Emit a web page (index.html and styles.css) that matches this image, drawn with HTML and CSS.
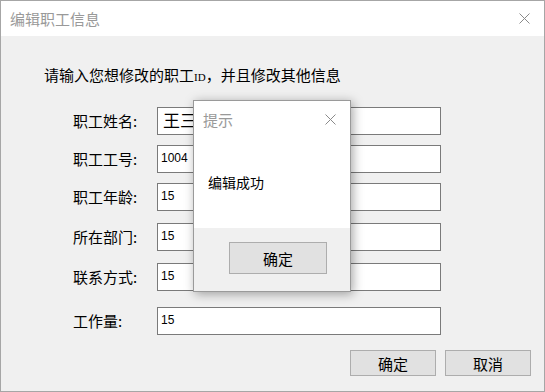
FILE: index.html
```html
<!DOCTYPE html>
<html>

<head>
    <meta charset="UTF-8">
    <meta name="viewport" content="width=device-width, initial-scale=1.0">
    <title>编辑职工信息</title>
    <link rel="stylesheet" href="styles.css">
</head>

<body>
    <div class="window">
        <div class="titlebar">
            <span class="title">编辑职工信息</span>
            <svg class="close" width="11" height="11" viewBox="0 0 11 11">
                <path d="M0.5 0.5 L10.5 10.5 M10.5 0.5 L0.5 10.5" stroke="#8a8a8a" stroke-width="1" fill="none" />
            </svg>
        </div>

        <div class="content">
            <p class="hint">请输入您想修改的职工<span class="small">ID</span>，并且修改其他信息</p>

            <div class="form">
                <div class="row">
                    <label>职工姓名:</label>
                    <input class="field cn" type="text" value="王三">
                </div>
                <div class="row">
                    <label>职工工号:</label>
                    <input class="field" type="text" value="1004">
                </div>
                <div class="row">
                    <label>职工年龄:</label>
                    <input class="field" type="text" value="15">
                </div>
                <div class="row gap-md">
                    <label>所在部门:</label>
                    <input class="field" type="text" value="15">
                </div>
                <div class="row gap-md">
                    <label>联系方式:</label>
                    <input class="field" type="text" value="15">
                </div>
                <div class="row gap-lg">
                    <label>工作量:</label>
                    <input class="field" type="text" value="15">
                </div>
            </div>

            <div class="actions">
                <button class="btn">确定</button>
                <button class="btn">取消</button>
            </div>
        </div>

        <!-- message box on top of the form -->
        <div class="msgbox">
            <div class="msg-title">
                <span>提示</span>
                <svg class="close" width="11" height="11" viewBox="0 0 11 11">
                    <path d="M0.5 0.5 L10.5 10.5 M10.5 0.5 L0.5 10.5" stroke="#8a8a8a" stroke-width="1" fill="none" />
                </svg>
            </div>
            <div class="msg-body">编辑成功</div>
            <div class="msg-footer">
                <button class="btn msg-btn">确定</button>
            </div>
        </div>
    </div>
</body>

</html>
```

FILE: styles.css
```css
* {
    box-sizing: border-box;
}

body {
    margin: 0;
    font-family: "Noto Sans CJK SC", "Liberation Sans", sans-serif;
    font-size: 15px;
    color: #000;
}

.window {
    position: relative;
    width: 545px;
    height: 392px;
    border: 1px solid #a6a6a6;
    background-color: #f0f0f0;
    display: flex;
    flex-direction: column;
}

/* Title bar */
.titlebar {
    height: 35px;
    flex-shrink: 0;
    background-color: #fff;
    display: flex;
    align-items: center;
    justify-content: space-between;
    padding: 0 14px 0 9px;
}

.title {
    color: #999;
    font-size: 15px;
}

.close {
    display: block;
}

.content {
    flex: 1;
    padding: 0 0 0 43px;
}

.hint {
    margin: 29px 0 0 0;
    font-size: 15px;
    line-height: 20px;
    height: 20px;
}

.hint .small {
    font-family: "Liberation Serif", serif;
    font-size: 11px;
    line-height: 1;
}

.form {
    margin-top: 22px;
    padding-left: 29px;
    display: flex;
    flex-direction: column;
    gap: 10px;
}

.row {
    display: flex;
    align-items: center;
    height: 28px;
}

.row.gap-md {
    margin-top: 2px;
}

.row.gap-lg {
    margin-top: 6px;
}

.row label {
    width: 84px;
    font-size: 15px;
    padding-bottom: 2px;
}

.field {
    width: 284px;
    height: 28px;
    border: 1px solid #7a7a7a;
    background-color: #fff;
    padding: 0 0 3px 3px;
    font-family: "Liberation Sans", sans-serif;
    font-size: 12px;
    color: #000;
    outline: none;
}

.field.cn {
    font-family: "Noto Sans CJK SC", sans-serif;
    font-size: 17px;
    padding-left: 5px;
}

.actions {
    display: flex;
    justify-content: flex-end;
    gap: 9px;
    margin-top: 15px;
    padding-right: 13px;
}

.btn {
    width: 86px;
    height: 26px;
    border: 1px solid #adadad;
    background-color: #e1e1e1;
    font-family: "Noto Sans CJK SC", sans-serif;
    font-size: 15px;
    color: #000;
    padding: 0;
}

/* Message box */
.msgbox {
    position: absolute;
    left: 192px;
    top: 99px;
    width: 158px;
    height: 192px;
    border: 1px solid #9a9a9a;
    background-color: #fff;
    box-shadow: 2px 2px 10px rgba(0, 0, 0, 0.35);
    display: flex;
    flex-direction: column;
}

.msg-title {
    height: 36px;
    display: flex;
    align-items: center;
    justify-content: space-between;
    padding: 0 14px 0 9px;
    color: #999;
    font-size: 15px;
}

.msg-body {
    height: 91px;
    padding: 35px 0 0 14px;
    font-size: 14px;
    line-height: 20px;
}

.msg-footer {
    flex: 1;
    background-color: #f0f0f0;
    padding: 14px 0 0 35px;
}

.msg-btn {
    width: 98px;
    height: 32px;
}
```
